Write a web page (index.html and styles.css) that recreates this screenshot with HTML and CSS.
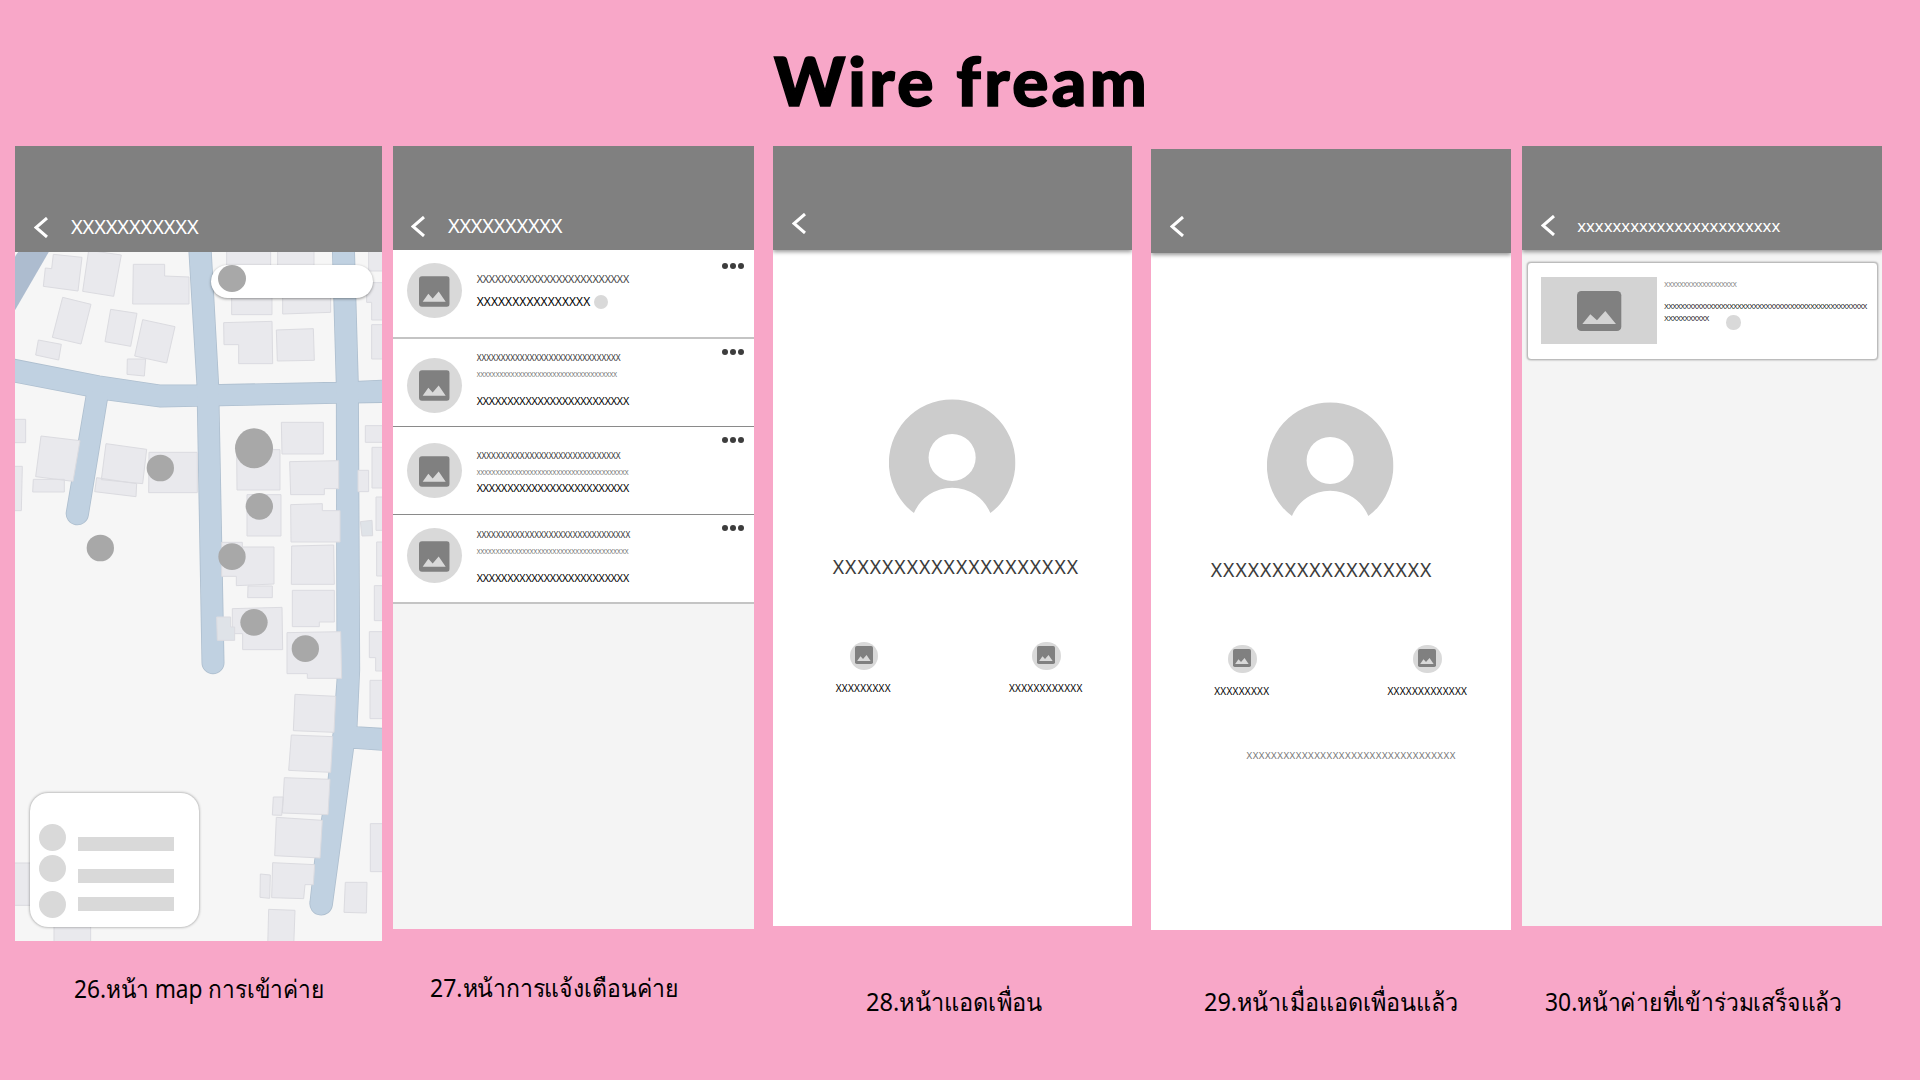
FILE: index.html
```html
<!DOCTYPE html>
<html lang="th">
<head>
<meta charset="utf-8">
<title>Wire fream</title>
<link rel="stylesheet" href="styles.css">
</head>
<body>
<svg class="defs" aria-hidden="true">
  <symbol id="back" viewBox="0 0 14 21"><path d="M13 1 2 10.5 13 20" fill="none" stroke="#fff" stroke-width="3"/></symbol>
  <symbol id="photo" viewBox="0 0 92 92"><rect width="92" height="92" rx="9" fill="#808080"/><path d="M11 77 28 53 41 67 59 46 80 77Z" fill="#d9d9d9"/></symbol>
  <symbol id="more" viewBox="0 0 22 6"><g fill="#3d3d3d"><circle cx="3" cy="3" r="3"/><circle cx="11" cy="3" r="3"/><circle cx="19" cy="3" r="3"/></g></symbol>
  <symbol id="person" viewBox="0 0 127 115"><path d="M25 114.4A63.4 63.4 0 1 1 101.6 114.4A41.5 41.5 0 0 0 25 114.4Z" fill="#ccc"/><circle cx="63.3" cy="58.6" r="23.6" fill="#fff"/></symbol>
</svg>

<h1 class="title">Wire fream</h1>

<main class="board">
  <figure class="frame frame-map">
    <section class="screen">
      <header class="bar"><svg class="back"><use href="#back"/></svg><span class="bar-text">XXXXXXXXXXX</span></header>
      <div class="map">
        <svg class="map-art" viewBox="45 755 1101 2067" preserveAspectRatio="none">
          <defs>
            <g id="roads">
              <path d="M30 1075 300 1128 480 1155 590 1155 1010 1147 1160 1140V1205L1010 1208 480 1219 322 1198 30 1142Z"/>
              <path d="M567 740 592 1155 607 1987A32 32 0 0 0 671 1987L655 1155 632 740Z"/>
              <path d="M262 1170 200 1535A32 32 0 0 0 264 1545L324 1180Z"/>
              <path d="M998 740 1010 1155 1012 2040 1000 2200 985 2340 965 2460 945 2580 931 2705A32 32 0 0 0 996 2715L1060 2243 1160 2250V2186L1070 2180 1078 2010 1074 1155 1062 740Z"/>
            </g>
          </defs>
          <path d="M30 790 65 740 155 740 45 930Z" fill="#adbccf"/>
          <use href="#roads" fill="none" stroke="#aebfcf" stroke-width="5"/>
          <use href="#roads" fill="#c0d1e1"/>
          <g fill="#e9e9ed" stroke="#dbdbe0" stroke-width="3">
            <g transform="translate(0 390)">
              <path d="M160 372 246 381 234 482 130 468 136 413 155 415ZM266 360 364 374 341 498 248 483ZM400 402H494V437L567 440V521H398ZM188 501 273 522 243 641 157 621ZM332 537 411 549 392 648 315 634ZM428 568 525 589 500 698 404 677ZM115 629 184 642 176 689 107 674ZM382 686H437L433 737 381 732Z"/>
              <path d="M680 355H812V415H680ZM833 355H942V415H833ZM695 490H816V553H695ZM848 490H992V546L848 551ZM671 577 816 573 818 700H716V643H672ZM829 599 940 595 943 690 832 692ZM1106 355H1160V422H1106ZM1100 457H1160V569H1115V516H1100ZM1115 583H1160V686H1115Z"/>
            </g>
            <g transform="translate(0 1200)">
              <path d="M30 57H77V127H30ZM30 198H67L64 331H30ZM123 107 240 121 219 243 107 229ZM100 237H193V275H98ZM318 130 440 147 428 250 304 238ZM290 232 410 250 408 289 284 274ZM447 156H592V277H446Z"/>
              <path d="M844 66H970V161H846ZM710 148H840V269H711ZM869 184 1016 181V265H973V283H872ZM741 283H843V407H741ZM872 313 967 310V331H1020V425H873ZM665 426H727V440H822V551L709 556V528H665ZM875 437 1001 434 1003 552H874ZM744 557H817V592H743ZM877 570H1003V665H958V679H877ZM697 625 846 621 848 748H728V700H697ZM861 697 1022 694 1025 834H922V820H861Z"/>
              <path d="M1096 76H1160V126H1096ZM1116 141H1160V263H1116ZM1074 210H1106V274H1074ZM1128 290H1160V390H1128ZM1130 425H1160V527H1130ZM1123 556H1160V661H1123ZM1108 694H1160V812H1127V772H1108Z"/>
              <path d="M1081 364 1116 360 1118 406 1086 407ZM650 650H692V680H704V720H652Z" fill="#dfe3e8"/>
            </g>
            <g transform="translate(0 2010)">
              <path d="M885 72 1007 78 1002 186 880 181ZM874 194 998 199 992 306 866 300ZM853 322 990 327 984 433 847 428ZM820 380H850L845 435 817 434ZM829 441 967 450 960 563 824 556ZM818 577 944 583 940 643H915L911 685 815 682ZM781 611 811 614 809 684 780 681ZM806 717 885 720 881 830H803ZM1036 636H1101L1099 728 1032 726ZM1111 460H1160V604H1111ZM1110 30H1160V145H1110ZM30 578H100V705H30ZM162 750H272V830H162Z"/>
            </g>
          </g>
          <g fill="#a8a8a8">
            <ellipse cx="762" cy="1344" rx="57" ry="60"/>
            <ellipse cx="481" cy="1403" rx="41" ry="40"/>
            <ellipse cx="778" cy="1518" rx="41" ry="40"/>
            <ellipse cx="301" cy="1643" rx="41" ry="40"/>
            <ellipse cx="696" cy="1669" rx="41" ry="40"/>
            <ellipse cx="762" cy="1866" rx="41" ry="40"/>
            <ellipse cx="916" cy="1945" rx="41" ry="40"/>
          </g>
        </svg>
        <div class="search"><i class="search-dot"></i></div>
        <div class="legend">
          <div class="legend-row"><i></i><b></b></div>
          <div class="legend-row"><i></i><b></b></div>
          <div class="legend-row"><i></i><b></b></div>
        </div>
      </div>
    </section>
    <figcaption>26.หน้า map การเข้าค่าย</figcaption>
  </figure>

  <figure class="frame frame-list">
    <section class="screen">
      <header class="bar"><svg class="back"><use href="#back"/></svg><span class="bar-text">XXXXXXXXXX</span></header>
      <article class="row row-1">
        <div class="avatar"><svg><use href="#photo"/></svg></div>
        <div class="lines">
          <p class="t-mid soft">XXXXXXXXXXXXXXXXXXXXXXXXX</p>
          <p class="t-big">XXXXXXXXXXXXXXXX<i class="status"></i></p>
        </div>
        <svg class="more"><use href="#more"/></svg>
      </article>
      <article class="row row-2">
        <div class="avatar"><svg><use href="#photo"/></svg></div>
        <div class="lines">
          <p class="t-small">XXXXXXXXXXXXXXXXXXXXXXXXXXXXXX</p>
          <p class="t-tiny">XXXXXXXXXXXXXXXXXXXXXXXXXXXXXXXXXXXXX</p>
          <p class="t-mid">XXXXXXXXXXXXXXXXXXXXXXXXX</p>
        </div>
        <svg class="more"><use href="#more"/></svg>
      </article>
      <article class="row row-3">
        <div class="avatar"><svg><use href="#photo"/></svg></div>
        <div class="lines">
          <p class="t-small">XXXXXXXXXXXXXXXXXXXXXXXXXXXXXX</p>
          <p class="t-tiny">XXXXXXXXXXXXXXXXXXXXXXXXXXXXXXXXXXXXXXXX</p>
          <p class="t-mid">XXXXXXXXXXXXXXXXXXXXXXXXX</p>
        </div>
        <svg class="more"><use href="#more"/></svg>
      </article>
      <article class="row row-4">
        <div class="avatar"><svg><use href="#photo"/></svg></div>
        <div class="lines">
          <p class="t-small">XXXXXXXXXXXXXXXXXXXXXXXXXXXXXXXX</p>
          <p class="t-tiny">XXXXXXXXXXXXXXXXXXXXXXXXXXXXXXXXXXXXXXXX</p>
          <p class="t-mid">XXXXXXXXXXXXXXXXXXXXXXXXX</p>
        </div>
        <svg class="more"><use href="#more"/></svg>
      </article>
    </section>
    <figcaption>27.หน้าการแจ้งเตือนค่าย</figcaption>
  </figure>

  <figure class="frame frame-add">
    <section class="screen">
      <header class="bar raised"><svg class="back"><use href="#back"/></svg></header>
      <div class="profile">
        <svg class="person"><use href="#person"/></svg>
        <h2 class="name">XXXXXXXXXXXXXXXXXXXX</h2>
        <div class="actions">
          <div class="action"><div class="avatar mini"><svg><use href="#photo"/></svg></div><p>XXXXXXXXX</p></div>
          <div class="action wide"><div class="avatar mini"><svg><use href="#photo"/></svg></div><p>XXXXXXXXXXXX</p></div>
        </div>
      </div>
    </section>
    <figcaption>28.หน้าแอดเพื่อน</figcaption>
  </figure>

  <figure class="frame frame-added">
    <section class="screen">
      <header class="bar raised"><svg class="back"><use href="#back"/></svg></header>
      <div class="profile">
        <svg class="person"><use href="#person"/></svg>
        <h2 class="name">XXXXXXXXXXXXXXXXXX</h2>
        <div class="actions">
          <div class="action"><div class="avatar mini"><svg><use href="#photo"/></svg></div><p>XXXXXXXXX</p></div>
          <div class="action wide"><div class="avatar mini"><svg><use href="#photo"/></svg></div><p>XXXXXXXXXXXXX</p></div>
        </div>
        <p class="note">XXXXXXXXXXXXXXXXXXXXXXXXXXXXXXXXXX</p>
      </div>
    </section>
    <figcaption>29.หน้าเมื่อแอดเพื่อนแล้ว</figcaption>
  </figure>

  <figure class="frame frame-done">
    <section class="screen">
      <header class="bar raised"><svg class="back"><use href="#back"/></svg><span class="bar-text">xxxxxxxxxxxxxxxxxxxxxxx</span></header>
      <article class="card">
        <div class="thumb"><svg viewBox="0 0 133 120"><rect width="133" height="120" rx="13" fill="#808080"/><path d="M16 99 40 70 60 88 85 60 117 99Z" fill="#d3d3d3"/></svg></div>
        <div class="card-text">
          <p class="card-title">XXXXXXXXXXXXXXXXXXX</p>
          <p class="card-body">XXXXXXXXXXXXXXXXXXXXXXXXXXXXXXXXXXXXXXXXXXXXXXXXXX<br>XXXXXXXXXXX<i class="status"></i></p>
        </div>
      </article>
    </section>
    <figcaption>30.หน้าค่ายที่เข้าร่วมเสร็จแล้ว</figcaption>
  </figure>
</main>
</body>
</html>
```
FILE: styles.css
```css
* { box-sizing: border-box; margin: 0; padding: 0; }

body {
  width: 1920px;
  height: 1080px;
  overflow: hidden;
  background: #f8a7c8;
  color: #000;
  font-family: "Noto Sans", "Open Sans", sans-serif;
}

svg { display: block; }
.defs { position: absolute; width: 0; height: 0; }

.title {
  height: 146px;
  padding: 38px 0 0 4px;
  font: 900 67.5px/84px Lato, sans-serif;
  letter-spacing: 3.4px;
  word-spacing: 0;
  text-align: center;
  -webkit-text-stroke: 1.6px #000;
}

/* Board of phone frames */
.board { display: flex; align-items: flex-start; padding-left: 15px; }
.frame { flex: none; }
.screen { overflow: hidden; background: #fff; }

.frame-map { width: 367px; margin-right: 11px; }
.frame-list { width: 361.3px; margin-right: 18.7px; }
.frame-add { width: 359.5px; margin-right: 18.5px; }
.frame-added { width: 360px; margin: 3px 11.2px 0 0; }
.frame-done { width: 359.8px; }

.frame-map .screen { height: 794.6px; }
.frame-list .screen { height: 783.3px; background: #f4f4f4; }
.frame-add .screen { height: 780.3px; }
.frame-added .screen { height: 781px; }
.frame-done .screen { height: 780.3px; background: #f4f4f4; }

/* Captions are set slightly condensed */
figcaption {
  font-size: 25px;
  line-height: 32px;
  white-space: nowrap;
  transform-origin: 0 0;
}
.frame-map figcaption { margin: 31px 0 0 59px; transform: scaleX(.908); }
.frame-list figcaption { margin: 42px 0 0 37px; transform: scaleX(.921); }
.frame-add figcaption { margin: 59px 0 0 93px; transform: scaleX(.946); }
.frame-added figcaption { margin: 55px 0 0 53px; transform: scaleX(.938); }
.frame-done figcaption { margin: 59px 0 0 23px; transform: scaleX(.916); }

/* App bar */
.bar {
  display: flex;
  align-items: flex-start;
  gap: 23px;
  height: 104px;
  padding: 70px 0 0 19px;
  background: #808080;
  color: #fff;
}
.raised { position: relative; box-shadow: 0 2px 4px rgba(0, 0, 0, .4); }
.back { flex: none; width: 14px; height: 21px; }
.bar-text { font-size: 20px; line-height: 20px; letter-spacing: -.13px; }
.frame-map .bar { height: 105.6px; padding-top: 70.5px; }
.frame-list .bar { padding: 69.5px 0 0 18px; }
.frame-list .bar-text { letter-spacing: -.3px; }
.frame-add .bar, .frame-added .bar { padding-top: 66.5px; }
.frame-done .bar { padding: 68.7px 0 0 18.7px; }
.frame-done .bar-text { margin: 2px 0 0 -.7px; font-size: 16.7px; line-height: 17px; letter-spacing: 0; }

/* Map */
.map { position: relative; height: 689px; background: #f6f6f6; }
.map-art { width: 367px; height: 689px; }
.search {
  position: absolute;
  left: 195.7px;
  top: 13.4px;
  width: 162px;
  height: 32.7px;
  padding-left: 7.3px;
  border-radius: 17px;
  background: #fff;
  box-shadow: 0 1px 3px rgba(0, 0, 0, .4);
}
.search-dot { display: block; width: 28px; height: 27px; border-radius: 50%; background: #a8a8a8; }
.legend {
  position: absolute;
  left: 14.6px;
  top: 541.1px;
  width: 169.6px;
  height: 134px;
  padding: 31px 0 0 9.4px;
  border-radius: 18px;
  background: #fff;
  box-shadow: 0 0 3px rgba(0, 0, 0, .45);
}
.legend-row { display: flex; gap: 12px; margin-bottom: 4px; }
.legend-row i { width: 27px; height: 27px; border-radius: 50%; background: #d9d9d9; }
.legend-row b { width: 96px; height: 14px; margin-top: 13.6px; background: #d9d9d9; }
.legend-row:nth-child(2) { margin-bottom: 7.4px; }
.legend-row:nth-child(2) b { margin-top: 14px; }
.legend-row:nth-child(3) b { margin-top: 6.7px; }

/* Notification list */
.row {
  display: flex;
  align-items: flex-start;
  height: 88px;
  padding-left: 14px;
  border-bottom: 1px solid #8a8a8a;
  background: #fff;
  white-space: nowrap;
}
.row-1, .row-4 { height: 89px; border-bottom: 2px solid #c4c4c4; }
.avatar {
  flex: none;
  width: 55px;
  height: 55px;
  padding: 12.5px 0 0 12.3px;
  border-radius: 50%;
  background: #d9d9d9;
}
.avatar svg { width: 30.7px; height: 31px; }
.row-1 .avatar, .row-4 .avatar { margin-top: 13px; }
.row-2 .avatar { margin-top: 18.7px; }
.row-3 .avatar { margin-top: 16px; }
.lines { flex: none; width: 260.3px; padding-left: 14.7px; color: #000; }
.more { flex: none; width: 22px; height: 6px; margin-top: 10.3px; }
.row-1 .more { margin-top: 13.3px; }

.t-big { font-size: 12px; line-height: 12px; letter-spacing: .07px; }
.t-mid { font-size: 10.7px; line-height: 10.7px; letter-spacing: -.17px; }
.t-small { color: #333; font-size: 8.2px; line-height: 8.2px; letter-spacing: 0; }
.t-tiny { color: #666; font-size: 6.4px; line-height: 6.4px; letter-spacing: .05px; }
.soft { color: #444; }
.row-1 .t-mid { margin-top: 23.8px; }
.row-1 .t-big { display: flex; margin-top: 11.9px; }
.row-2 .t-small { margin-top: 14.7px; }
.row-2 .t-tiny { margin-top: 10.5px; }
.row-2 .t-mid { margin-top: 17.3px; }
.row-3 .t-small { margin-top: 25px; }
.row-3 .t-tiny { margin-top: 9.7px; }
.row-3 .t-mid { margin-top: 6.3px; }
.row-4 .t-small { margin-top: 15.7px; }
.row-4 .t-tiny { margin-top: 10.2px; }
.row-4 .t-mid { margin-top: 17.3px; }
.status { flex: none; width: 14.4px; height: 14.4px; border-radius: 50%; background: #d9d9d9; }
.row-1 .status { margin: -1.5px 0 0 3.2px; }

/* Profile */
.profile { padding-top: 149px; }
.person { width: 126.7px; height: 114.7px; margin-left: 116px; }
.frame-added .person { margin-left: 116.5px; }
.name {
  margin: 43.3px 0 0 59.8px;
  color: #3c3c3c;
  font-size: 19.4px;
  font-weight: 400;
  line-height: 19.2px;
  letter-spacing: .95px;
}
.actions { display: flex; margin-top: 65.5px; padding-left: 62.7px; }
.frame-added .actions { padding-left: 63.2px; }
.action { flex: none; width: 173.3px; }
.mini { width: 28.6px; height: 28.6px; margin-left: 14px; padding: 4.8px 0 0 5.3px; }
.mini svg { width: 18px; height: 18px; }
.wide .mini { margin-left: 23px; }
.frame-added .wide .mini { margin-left: 25.7px; }
.action p { margin-top: 13px; color: #000; font-size: 10px; line-height: 10px; letter-spacing: .27px; }
.note { margin: 54.3px 0 0 95.5px; color: #777; font-size: 9.7px; line-height: 10px; letter-spacing: .48px; }

/* Finished camp card */
.card {
  display: flex;
  height: 98px;
  margin: 11.7px 4.3px 0 4.7px;
  padding: 14.3px 0 0 13.5px;
  border: 1.5px solid #bcbcbc;
  border-radius: 4px;
  background: #fff;
  box-shadow: 0 0 2px rgba(0, 0, 0, .4);
}
.thumb { flex: none; width: 116px; height: 67px; padding: 14px 0 0 36px; background: #d3d3d3; }
.thumb svg { width: 44.3px; height: 40px; }
.card-text { padding: 4.5px 0 0 7px; white-space: nowrap; }
.card-title { color: #777; font-size: 6.8px; line-height: 7px; letter-spacing: -.19px; }
.card-body { margin-top: 11.6px; color: #111; font-size: 7.6px; line-height: 12px; letter-spacing: -.4px; }
.card-body .status { display: inline-block; margin: 0 0 -8.5px 17.5px; vertical-align: baseline; }
```
